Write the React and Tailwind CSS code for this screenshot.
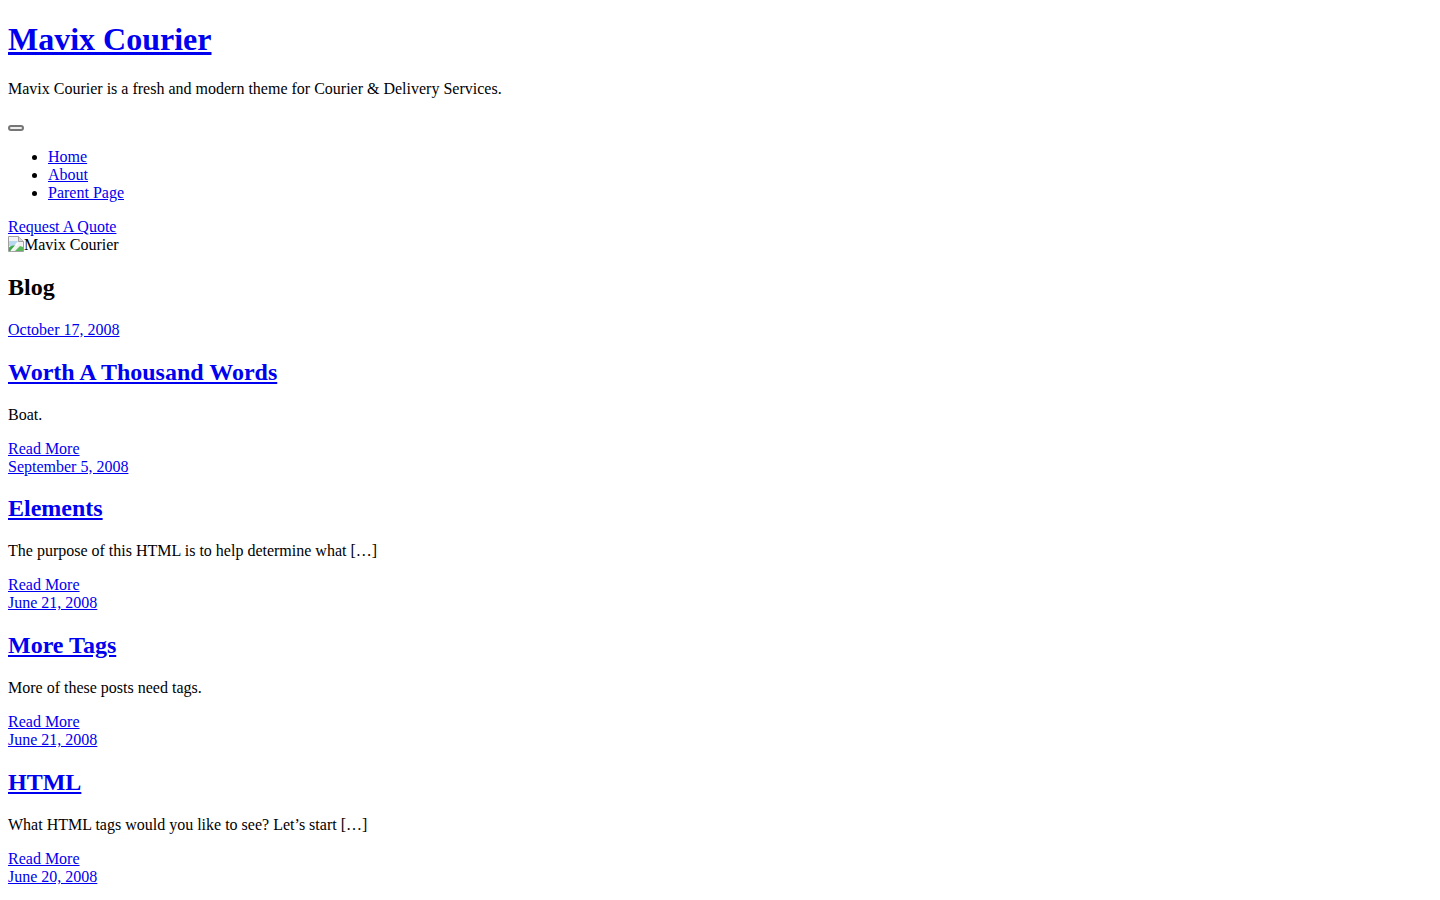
import React from 'react';

const posts = [
  { date: 'October 17, 2008', title: 'Worth A Thousand Words', excerpt: 'Boat.' },
  { date: 'September 5, 2008', title: 'Elements', excerpt: 'The purpose of this HTML is to help determine what [\u2026]' },
  { date: 'June 21, 2008', title: 'More Tags', excerpt: 'More of these posts need tags.' },
  { date: 'June 21, 2008', title: 'HTML', excerpt: 'What HTML tags would you like to see? Let\u2019s start [\u2026]' },
  { date: 'June 20, 2008', title: 'Image Alignment', excerpt: '' },
];

const link = 'text-[#0000ee] underline';

// Chrome-style broken image placeholder
const BrokenImage = () => (
  <svg width="16" height="16" viewBox="0 0 16 16" className="inline-block align-[-2px]">
    <path d="M0.5 0.5h10l5 5v10h-15z" fill="#f2f2f2" stroke="#a0a0a0" />
    <path d="M10.5 0.5v5h5" fill="#d8d8d8" stroke="#a0a0a0" />
    <path d="M1 5h9l-4 5H1z" fill="#b9d7ef" />
    <path d="M1 15v-3.5c2.5-2 5-2.5 7-1.5L3 15z" fill="#3fa94a" />
    <path d="M7 15l5-5 3 1v4z" fill="#5cb85c" />
    <path d="M3 15l7-8" stroke="#ffffff" strokeWidth="1.2" />
  </svg>
);

export default function App() {
  return (
    <div className="mx-2 bg-white text-black text-base leading-[18px] font-['Liberation_Serif',serif]">
      <header>
        <h1 className="my-[21.44px] text-[32px] leading-[37px] font-bold">
          <a href="#" className={link}>Mavix Courier</a>
        </h1>
        <p className="my-4">Mavix Courier is a fresh and modern theme for Courier &amp; Delivery Services.</p>

        <nav>
          <div className="h-[18px] pt-[11px]">
            <button className="block w-4 h-[6px] border-2 border-[#767676] rounded-[3px] bg-[#efefef]" />
          </div>
          <ul className="my-4 pl-10 list-disc">
            <li><a href="#" className={link}>Home</a></li>
            <li><a href="#" className={link}>About</a></li>
            <li><a href="#" className={link}>Parent Page</a></li>
          </ul>
        </nav>

        <div><a href="#" className={link}>Request A Quote</a></div>
        <div className="h-[18px]">
          <BrokenImage />
          <span>Mavix Courier</span>
        </div>
      </header>

      <main>
        <h2 className="my-[19.92px] text-2xl leading-[27px] font-bold">Blog</h2>

        {posts.map((post, i) => (
          <article key={i}>
            <div className={i === 0 ? 'mt-[19.92px]' : ''}>
              <a href="#" className={link}>{post.date}</a>
            </div>
            <h2 className="my-[19.92px] text-2xl leading-[27px] font-bold">
              <a href="#" className={link}>{post.title}</a>
            </h2>
            {post.excerpt && <p className="my-4">{post.excerpt}</p>}
            <div><a href="#" className={link}>Read More</a></div>
          </article>
        ))}
      </main>
    </div>
  );
}
